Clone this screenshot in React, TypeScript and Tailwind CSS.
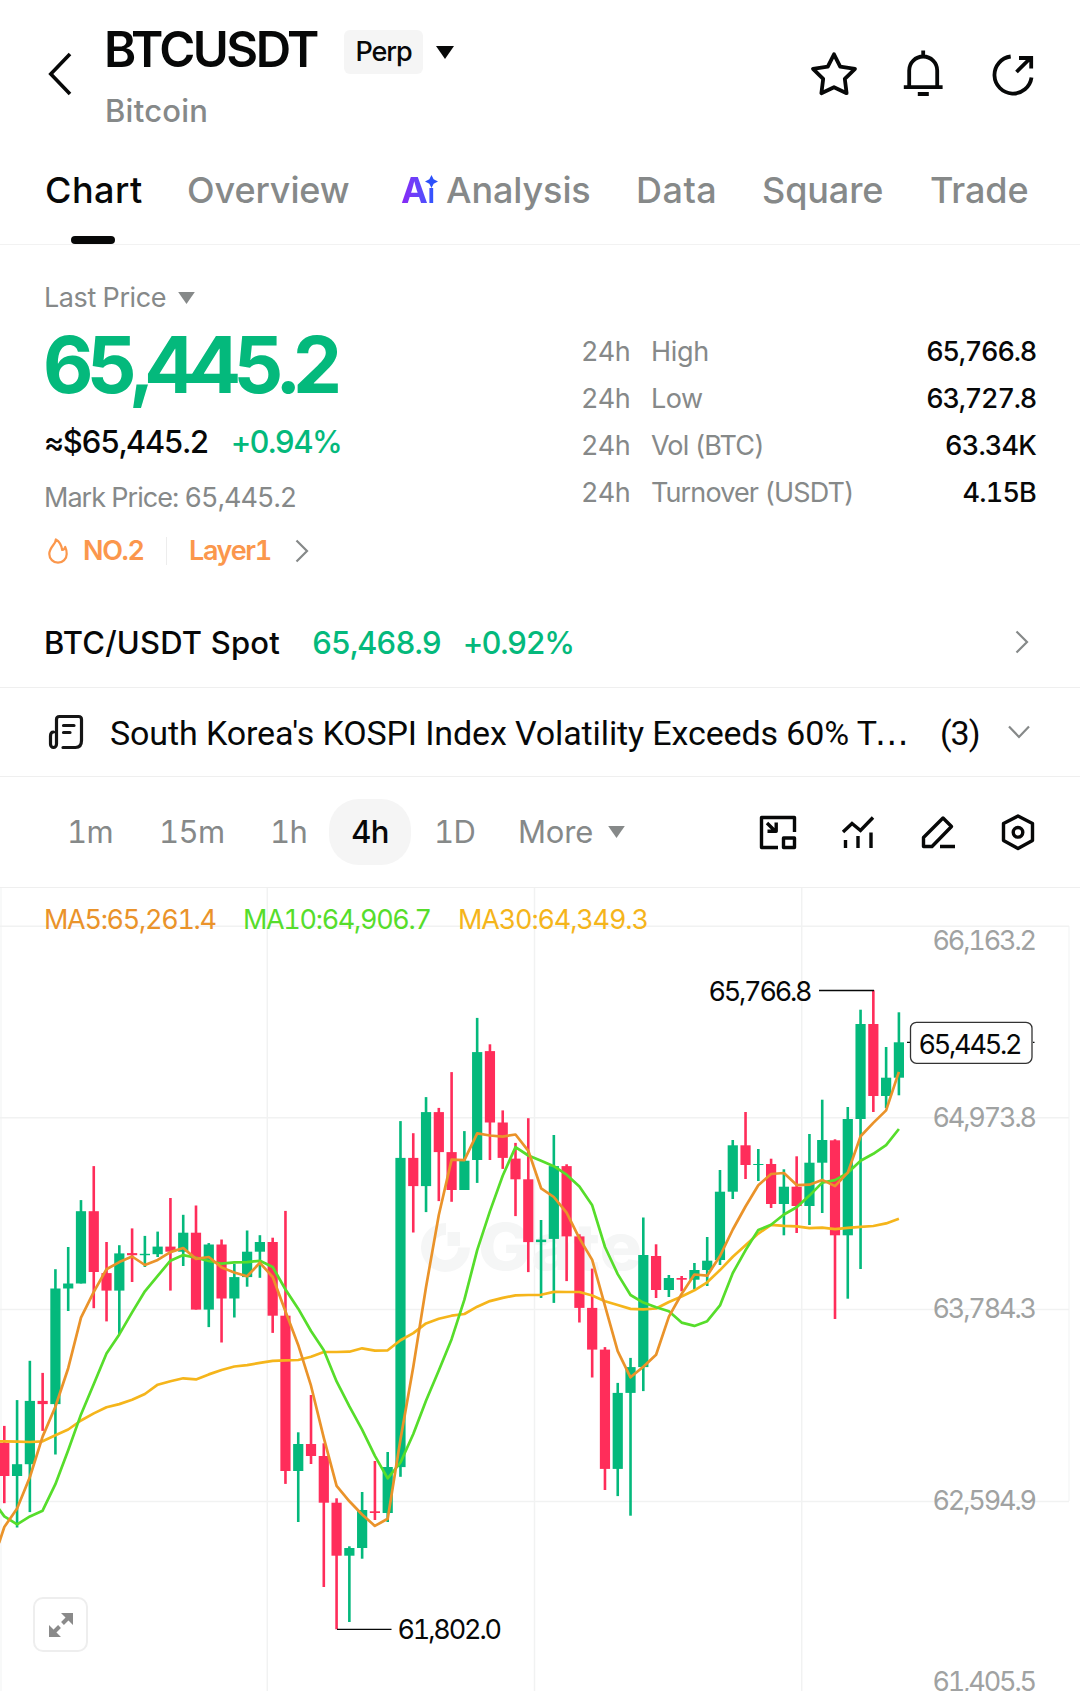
import React from "react";

const FONT = "font-['Inter','Liberation_Sans',sans-serif]";

const GREEN = "#04b97c";
const RED = "#ff2d5a";

// [high, body top, body bottom, low, is up]
const candles: [number, number, number, number, number][] = [
  [1425.9, 1442.7, 1476, 1503.2, 0],
  [1400.1, 1464.2, 1476, 1527.5, 1],
  [1360.8, 1400.9, 1464.2, 1512.1, 1],
  [1372.9, 1400.9, 1404.1, 1430.9, 0],
  [1269.2, 1288.5, 1404.1, 1454.5, 1],
  [1247, 1283.5, 1288.5, 1311, 1],
  [1200.1, 1211.2, 1283.5, 1283.5, 1],
  [1166.1, 1211.2, 1272, 1308.2, 0],
  [1242, 1273.1, 1290.6, 1321.4, 0],
  [1245.2, 1253.4, 1290.6, 1334, 1],
  [1228.4, 1253.1, 1255.2, 1282, 0],
  [1235.9, 1253.8, 1255.2, 1267, 1],
  [1231.6, 1246.6, 1254.2, 1257, 1],
  [1198, 1246.6, 1251.7, 1290.6, 0],
  [1214.8, 1232.7, 1251.7, 1266, 1],
  [1205.5, 1232.7, 1309.6, 1309.6, 0],
  [1243.1, 1244.5, 1309.6, 1327.1, 1],
  [1239.5, 1244.5, 1298.5, 1342.5, 0],
  [1263.8, 1277.1, 1298.5, 1317.5, 1],
  [1230.5, 1251.7, 1277.1, 1286.7, 1],
  [1235.2, 1242, 1251.7, 1277.8, 1],
  [1237.7, 1242, 1315.7, 1332.9, 0],
  [1210.9, 1315.7, 1471, 1483.9, 0],
  [1432.3, 1444, 1471, 1522, 1],
  [1395, 1444, 1456, 1464, 0],
  [1443.3, 1456, 1502.7, 1587, 0],
  [1498.3, 1502.7, 1555.7, 1629.3, 0],
  [1546.3, 1548, 1555.7, 1622, 1],
  [1492, 1510, 1548, 1558.7, 1],
  [1461, 1511.3, 1513, 1520, 0],
  [1452, 1467, 1513, 1522, 1],
  [1121.1, 1157.9, 1467.1, 1476.8, 1],
  [1133.2, 1157.9, 1186.1, 1232.5, 0],
  [1097.1, 1112.1, 1186.1, 1212.1, 1],
  [1107.9, 1112.1, 1152.1, 1201.1, 0],
  [1072.1, 1152.1, 1190, 1201.8, 0],
  [1131.1, 1160.7, 1190, 1190, 1],
  [1017.9, 1052.1, 1160, 1182.9, 1],
  [1044.3, 1051.1, 1122.5, 1160, 0],
  [1110.4, 1122.5, 1157.9, 1168.9, 0],
  [1142.9, 1158.6, 1179.3, 1216.1, 0],
  [1118.2, 1179.3, 1242.1, 1272.1, 0],
  [1220, 1239.6, 1242.1, 1297.9, 1],
  [1135, 1166.1, 1238.9, 1302.9, 1],
  [1164.3, 1166.1, 1236.4, 1281.1, 0],
  [1234.3, 1236.4, 1307.9, 1322.5, 0],
  [1268.6, 1307.9, 1349.6, 1377.5, 0],
  [1347.1, 1349.6, 1468.9, 1490, 0],
  [1382.9, 1392.9, 1468.9, 1496.1, 1],
  [1357.9, 1367.1, 1392.9, 1515.7, 1],
  [1217.5, 1255, 1367.1, 1391.1, 1],
  [1244.3, 1256, 1290, 1298, 0],
  [1275, 1278, 1290, 1297, 1],
  [1276, 1278, 1279.7, 1291.3, 0],
  [1263, 1270, 1279.7, 1289.3, 1],
  [1237, 1260.7, 1270, 1286, 1],
  [1170, 1191.7, 1260, 1265, 1],
  [1140, 1145.3, 1191.7, 1199, 1],
  [1112, 1145.3, 1165, 1179, 0],
  [1149, 1164, 1165, 1181, 1],
  [1158.7, 1164, 1204, 1208, 0],
  [1169.3, 1186.7, 1204, 1235.3, 1],
  [1156.3, 1186.7, 1206, 1233, 0],
  [1134, 1162.7, 1206, 1225, 1],
  [1099.7, 1140, 1162.7, 1213, 1],
  [1139.3, 1140.3, 1235.3, 1319, 0],
  [1107, 1119, 1235.3, 1298.7, 1],
  [1009.7, 1024, 1119, 1269, 1],
  [990.3, 1024, 1096, 1112, 0],
  [1047, 1077.7, 1096, 1108, 1],
  [1012.3, 1042.3, 1077.7, 1095.3, 1],
];

// values for the candles whose averaging window starts before the visible range
const ma5Head = [1527, 1508.5, 1477, 1436.6];
const ma10Head = [1516.4, 1524.3, 1516.4, 1510.7, 1484.2, 1450.2, 1414.4, 1384, 1353.6];
const ma30Head = [
  1441.3, 1441.6, 1442, 1441.3, 1435.2, 1429.5, 1420.5, 1413.4, 1407.3, 1404.1,
  1399.8, 1394, 1384.7, 1381.2, 1378.3, 1379.4, 1374.4, 1370, 1366.5, 1365.1,
  1362.9, 1360.8, 1360.4, 1360, 1356.7, 1352, 1352, 1351.7, 1348.3, 1350.7,
  1350.3,
];

const xAt = (i: number) => 4.3 + i * 12.78;
const closes = candles.map((c) => (c[4] ? c[1] : c[2]));

const maLine = (size: number, head: number[], startY: number) => {
  const points = [`-1,${startY}`];
  closes.forEach((_, i) => {
    const y =
      i < head.length
        ? head[i]
        : closes.slice(i - size + 1, i + 1).reduce((a, b) => a + b, 0) / size;
    points.push(`${xAt(i).toFixed(1)},${y.toFixed(1)}`);
  });
  return points.join(" ");
};

const gridX = [267.3, 534.5, 801.7];
const gridY = [926.3, 1117.8, 1309.6, 1501.4];

const axisLabels = [
  { text: "66,163.2", y: 940 },
  { text: "64,973.8", y: 1117 },
  { text: "63,784.3", y: 1308 },
  { text: "62,594.9", y: 1500 },
  { text: "61,405.5", y: 1681 },
];

const stats = [
  { label: "High", value: "65,766.8", labelClass: "tracking-[-0.01em]", valueClass: "tracking-[-0.045em]" },
  { label: "Low", value: "63,727.8", labelClass: "tracking-[-0.02em]", valueClass: "tracking-[-0.045em]" },
  { label: "Vol (BTC)", value: "63.34K", labelClass: "tracking-[-0.033em]", valueClass: "tracking-[-0.03em]" },
  { label: "Turnover (USDT)", value: "4.15B", labelClass: "tracking-[-0.033em]", valueClass: "tracking-[-0.03em]" },
];

const Caret = ({ className }: { className: string }) => (
  <svg viewBox="0 0 18 13" className={className}>
    <path d="M0 0h18L9 13z" fill="currentColor" />
  </svg>
);

const ChevronRight = () => (
  <svg viewBox="0 0 14 24" className="h-[24px] w-[14px]">
    <path d="M1.5 1.5 12 12 1.5 22.5" fill="none" stroke="#868989" strokeWidth="2.2" />
  </svg>
);

const Header = () => (
  <header className="flex h-[148px] items-start pr-[46px] pl-[48px]">
    <svg viewBox="0 0 24 44" className="mt-[52px] h-[44px] w-[24px]">
      <path d="M22 2 2.8 22 22 42" fill="none" stroke="#070808" strokeWidth="3.6" />
    </svg>
    <div className="ml-[32px] flex-1 pt-[24px]">
      <div className="flex h-[50px] items-center">
        <h1 className="w-[240px] text-[49px] leading-none font-semibold tracking-[-0.052em]">BTCUSDT</h1>
        <span className="mt-[5px] flex h-[44px] w-[79px] items-center justify-center rounded-md bg-[#f5f5f5] pt-[2px] text-[27px] font-medium tracking-[-0.04em]">
          Perp
        </span>
        <Caret className="mt-[6px] ml-[13px] h-[13px] w-[18px]" />
      </div>
      <p className="mt-[19px] ml-[1px] text-[31px] leading-[36px] font-medium tracking-[0.008em] text-[#868989]">
        Bitcoin
      </p>
    </div>
    <div className="mt-[48px] flex items-center">
      <svg viewBox="0 0 48 50" className="mr-[45px] h-[50px] w-[48px]" fill="none" stroke="#070808" strokeWidth="3.8" strokeLinejoin="round">
        <path d="M24 6.3 30.2 18.6 45 20.8 34.8 30.8 36.6 45.2 24 39.2 11.4 45.2 13.2 30.8 3 20.8 17.8 18.6Z" />
      </svg>
      <svg viewBox="0 0 40 50" className="mr-[49px] h-[50px] w-[40px]" fill="none" stroke="#070808" strokeWidth="3.8">
        <path d="M6.2 38V22.5a14 14 0 0 1 28 0V38M.8 39.2h38.8M20.2 2.5v6M14.8 46h11" />
      </svg>
      <svg viewBox="0 0 42 50" className="h-[50px] w-[42px]" fill="none" stroke="#070808" strokeWidth="3.8">
        <path d="M18.7 8.5A18.6 18.6 0 1 0 39.5 29.5M24.5 24 39 9.5M27 10h12.2v10.5" />
      </svg>
    </div>
  </header>
);

const Tabs = () => (
  <nav className="flex h-[97px] border-b border-[#f2f2f2] pl-[45px] text-[36px] leading-[84px] font-medium tracking-[-0.003em] whitespace-nowrap text-[#868989]">
    <div className="flex w-[142px] flex-col text-[#070808]">
      <span className="h-[88px] tracking-[0.014em]">Chart</span>
      <span className="ml-[26px] h-[8px] w-[44px] rounded-full bg-[#070808]" />
    </div>
    <span className="w-[214px]">Overview</span>
    <span className="relative w-[45px] font-bold">
      <span className="bg-gradient-to-r from-[#8a22f5] to-[#2456ff] bg-clip-text text-transparent">
        A<span className="text-[26px] leading-none">ı</span>
      </span>
      <svg viewBox="0 0 14 14" className="absolute top-[27px] left-[24px] h-[13px] w-[13px]">
        <path d="M7 0 9.3 4.7 14 7 9.3 9.3 7 14 4.7 9.3 0 7 4.7 4.7Z" fill="#2b50fb" />
      </svg>
    </span>
    <span className="w-[190px]">Analysis</span>
    <span className="w-[126px] tracking-[0.014em]">Data</span>
    <span className="w-[168px]">Square</span>
    <span>Trade</span>
  </nav>
);

const Price = () => (
  <section className="flex h-[351px] justify-between pr-[44px] pl-[44px]">
    <div className="whitespace-nowrap">
      <div className="mt-[36px] flex h-[34px] items-center text-[27px] tracking-[-0.016em] text-[#868989]">
        <span className="w-[134px]">Last Price</span>
        <Caret className="h-[12px] w-[17px]" />
      </div>
      <div className="mt-[10px] -ml-[1px] text-[78px] leading-[80px] font-bold tracking-[-0.082em] text-[#04b97c]">65,445.2</div>
      <div className="mt-[19px] flex h-[36px] items-center text-[31px] font-medium tracking-[-0.042em]">
        <span className="w-[187px]">≈$65,445.2</span>
        <span className="tracking-[-0.05em] text-[#04b97c]">+0.94%</span>
      </div>
      <div className="mt-[21px] text-[27px] leading-[34px] tracking-[-0.036em] text-[#868989]">Mark Price: 65,445.2</div>
      <div className="mt-[19px] flex h-[34px] items-center text-[27px] font-semibold tracking-[-0.05em] text-[#fb974c]">
        <svg viewBox="0 0 20 26" className="ml-[4px] h-[26px] w-[20px]" fill="none" stroke="#fb974c" strokeWidth="2.2" strokeLinejoin="round">
          <path d="M7.8 1.5C8.2 6 1.3 9 1.3 16a8.7 8.7 0 0 0 17.4 0c0-2.6-.5-5-1.500-7-.5 1.8-1.5 2.8-3 3C13.5 7.5 11.5 3.5 7.8 1.5Z" />
        </svg>
        <span className="ml-[15px] w-[83px]">NO.2</span>
        <span className="h-[28px] w-px bg-[#ededed]" />
        <span className="ml-[22px] w-[106px]">Layer1</span>
        <ChevronRight />
      </div>
    </div>
    <div className="mt-[83px] w-[455px] text-[27px] leading-[47px] whitespace-nowrap">
      {stats.map((s) => (
        <div key={s.label} className="flex text-[#868989]">
          <span className="w-[70px] tracking-[-0.025em]">24h</span>
          <span className={`flex-1 ${s.labelClass}`}>{s.label}</span>
          <span className={`font-medium text-[#070808] ${s.valueClass}`}>{s.value}</span>
        </div>
      ))}
    </div>
  </section>
);

const Spot = () => (
  <section className="flex h-[92px] items-center border-b border-[#efefef] pr-[51px] pl-[44px] text-[31px] font-medium whitespace-nowrap text-[#04b97c]">
    <span className="mt-[3px] w-[268px] tracking-[0.006em] text-[#070808]">BTC/USDT Spot</span>
    <span className="mt-[3px] w-[151px] tracking-[-0.034em]">65,468.9</span>
    <span className="mt-[3px] flex-1 tracking-[-0.048em]">+0.92%</span>
    <ChevronRight />
  </section>
);

const News = () => (
  <section className="flex h-[89px] items-center border-b border-[#efefef] pl-[48px] font-['Roboto',sans-serif] text-[34px] text-[#070808]">
    <svg viewBox="0 0 36 36" className="h-[36px] w-[36px]" fill="none" stroke="#151515" strokeWidth="3.2" strokeLinejoin="round" strokeLinecap="round">
      <path d="M8.5 30V5.5Q8.5 2.5 11.5 2.5H30.5Q33.5 2.5 33.5 5.5V26.5Q33.5 33.5 27.5 33.5H15M8.5 30a3 3.5 0 0 1-6 0V22Q2.5 18 5.5 18" />
      <path d="M15.5 11.5H26M15.5 18.5H22" />
    </svg>
    <span className="mt-[3px] ml-[26px] flex w-[830px] tracking-[-0.0035em] whitespace-nowrap">
      South Korea's KOSPI Index Volatility Exceeds 60% T
      <span className="-ml-[2px] font-['DejaVu_Sans',sans-serif] tracking-[-0.04em]">…</span>
    </span>
    <span className="mt-[3px] w-[68px] tracking-[-0.03em]">(3)</span>
    <svg viewBox="0 0 22 14" className="h-[14px] w-[22px]">
      <path d="M1 1.5 11 12 21 1.5" fill="none" stroke="#868989" strokeWidth="2.2" />
    </svg>
  </section>
);

const Toolbar = () => (
  <section className="flex h-[111px] items-center border-b border-[#efefef] text-[31px] tracking-[-0.02em] whitespace-nowrap text-[#868989]">
    <span className="ml-[67px] w-[92px]">1m</span>
    <span className="w-[111px]">15m</span>
    <span className="w-[59px]">1h</span>
    <span className="flex h-[66px] w-[82px] items-center justify-center rounded-[30px] bg-[#f5f5f5] font-medium text-[#070808]">4h</span>
    <span className="ml-[23px] w-[84px]">1D</span>
    <span className="w-[90px] tracking-[-0.005em]">More</span>
    <Caret className="h-[12px] w-[17px]" />
    <svg viewBox="0 0 38 36" className="ml-[134px] h-[36px] w-[38px]" fill="none" stroke="#070808" strokeWidth="3.4" strokeLinejoin="round">
      <path d="M19 33.5H2.5V3.5H35.5V18M24.5 24H35.5V33.5H24.5ZM8 9 15.5 16.5M17.2 8.5V17.2H8.5" />
    </svg>
    <svg viewBox="0 0 34 36" className="ml-[44px] h-[36px] w-[34px]" fill="none" stroke="#070808" strokeWidth="3.4">
      <path d="M2 18 11 9.5 19.5 16.5 32 3.5M4.5 26V34M17 22V34M30 18.5V34" />
    </svg>
    <svg viewBox="0 0 36 36" className="ml-[45px] h-[36px] w-[36px]" fill="none" stroke="#070808" strokeWidth="3.4" strokeLinejoin="round">
      <path d="M3.5 32.5V23.5L23 4 31.5 12.5 12 32.5ZM20 32.5H35" />
    </svg>
    <svg viewBox="0 0 34 38" className="ml-[45px] h-[38px] w-[34px]" fill="none" stroke="#070808" strokeWidth="3.4" strokeLinejoin="round">
      <path d="M17 3 31.5 10.5V27.5L17 35.5 2.5 27.5V10.5Z" />
      <circle cx="17" cy="19.3" r="4.8" />
    </svg>
  </section>
);

const Chart = () => (
  <section className="relative h-[803px] overflow-hidden">
    <svg viewBox="0 888 1080 803" className="block h-[803px] w-[1080px]">
      <path d="M1 888V1691M1069 926V1501" stroke="#f6f7f7" strokeWidth="1.5" />
      {gridX.map((x) => (
        <path key={x} d={`M${x} 888V1691`} stroke="#f1f2f2" strokeWidth="1.5" />
      ))}
      {gridY.map((y) => (
        <path key={y} d={`M0 ${y}H1069`} stroke="#f1f2f2" strokeWidth="1.5" />
      ))}
      <g fill="#f5f6f6">
        <path d="M446 1223a24.5 24.5 0 1 0 24 24.5h-12a12.5 12.5 0 1 1-12-12.5Z" />
        <path d="M447.5 1232H460V1246H447.5Z" />
        <text x="478" y="1270" fontSize="65" fontWeight="800" textLength="164" lengthAdjust="spacingAndGlyphs">Gate</text>
      </g>
      {candles.map(([high, top, bottom, low, up], i) => (
        <g key={i} fill={up ? GREEN : RED}>
          <rect x={xAt(i) - 1.3} y={high} width="2.6" height={low - high} />
          <rect x={xAt(i) - 5.1} y={top} width="10.2" height={bottom - top} />
        </g>
      ))}
      <g fill="none" strokeWidth="2.7" strokeLinejoin="round">
        <polyline points={maLine(30, ma30Head, 1441.3)} stroke="#f5b51b" />
        <polyline points={maLine(10, ma10Head, 1509)} stroke="#56dd2b" />
        <polyline points={maLine(5, ma5Head, 1543)} stroke="#ea932a" />
      </g>
      <path d="M819 990.5H874M337 1629.3H391.5M907 1042.3H911M1033 1042.3H1034.5" stroke="#070808" strokeWidth="1.3" />
      <rect x="910.500" y="1022.3" width="121.5" height="41" rx="6" fill="#fff" stroke="#333" strokeWidth="1.3" />
      <g fontSize="27">
        <text x="708.500" y="1000.7" fill="#070808" textLength="104">65,766.8</text>
        <text x="397.500" y="1639.3" fill="#070808" textLength="104.5">61,802.0</text>
        <text x="918.500" y="1053.7" fill="#070808" textLength="104">65,445.2</text>
        {axisLabels.map((l) => (
          <text key={l.text} x="932.500" y={l.y + 9.5} fill="#a0a2a2" textLength="104.5">{l.text}</text>
        ))}
      </g>
    </svg>
    <div className="absolute top-[15px] left-[44px] flex text-[27px] leading-[34px] whitespace-nowrap">
      <span className="w-[199px] tracking-[-0.048em] text-[#ea932a]">MA5:65,261.4</span>
      <span className="w-[215px] tracking-[-0.049em] text-[#56dd2b]">MA10:64,906.7</span>
      <span className="tracking-[-0.043em] text-[#f5b51b]">MA30:64,349.3</span>
    </div>
    <button className="absolute top-[709px] left-[33px] flex h-[55px] w-[55px] items-center justify-center rounded-[10px] border-2 border-[#eeeeee] bg-white">
      <svg viewBox="0 0 26 26" className="h-[26px] w-[26px]">
        <path d="M13 1H25V13L21.5 9.5 16.5 4.5ZM1 13V25H13L9.5 21.5 4.5 16.5Z" fill="#8a8a8a" />
        <path d="M14.5 11.5 20 6M11.5 14.5 6 20" stroke="#8a8a8a" strokeWidth="4" />
      </svg>
    </button>
  </section>
);

const App = () => {
  return (
    <main className={`h-[1691px] w-[1080px] overflow-hidden bg-white text-[#070808] tabular-nums ${FONT}`}>
      <Header />
      <Tabs />
      <Price />
      <Spot />
      <News />
      <Toolbar />
      <Chart />
    </main>
  );
};

export default App;
